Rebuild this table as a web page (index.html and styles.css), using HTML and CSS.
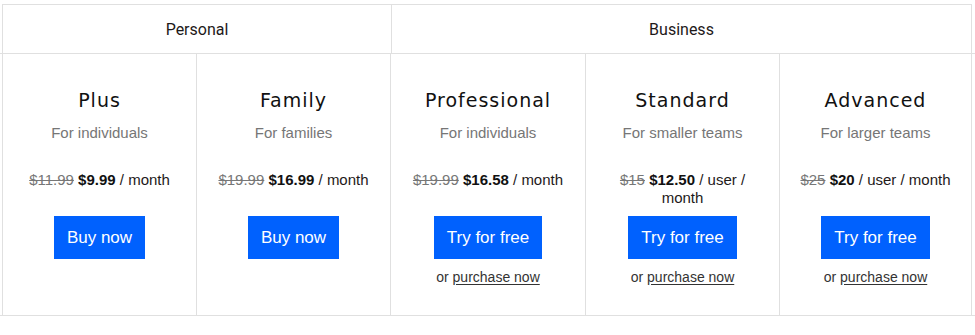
FILE: index.html
```html
<!DOCTYPE html>
<html>
<head>
<meta charset="utf-8">
<link rel="stylesheet" href="styles.css">
</head>
<body>
<div class="head">
  <div class="group personal">Personal</div>
  <div class="group business">Business</div>
</div>
<div class="band">
  <div class="plans">
    <div class="plan">
      <div class="title">Plus</div>
      <div class="sub">For individuals</div>
      <div class="price"><s>$11.99</s> <b>$9.99</b> / month</div>
      <a class="btn">Buy now</a>
    </div>
    <div class="plan">
      <div class="title">Family</div>
      <div class="sub">For families</div>
      <div class="price"><s>$19.99</s> <b>$16.99</b> / month</div>
      <a class="btn">Buy now</a>
    </div>
    <div class="plan">
      <div class="title">Professional</div>
      <div class="sub">For individuals</div>
      <div class="price"><s>$19.99</s> <b>$16.58</b> / month</div>
      <a class="btn">Try for free</a>
      <div class="alt">or <u>purchase now</u></div>
    </div>
    <div class="plan">
      <div class="title">Standard</div>
      <div class="sub">For smaller teams</div>
      <div class="price narrow"><s>$15</s> <b>$12.50</b> / user /<br>month</div>
      <a class="btn">Try for free</a>
      <div class="alt">or <u>purchase now</u></div>
    </div>
    <div class="plan last">
      <div class="title">Advanced</div>
      <div class="sub">For larger teams</div>
      <div class="price"><s>$25</s> <b>$20</b> / user / month</div>
      <a class="btn">Try for free</a>
      <div class="alt">or <u>purchase now</u></div>
    </div>
  </div>
</div>
</body>
</html>
```
FILE: styles.css
```css
* { box-sizing: border-box; }
html, body { margin: 0; padding: 0; background: #fff; }
body {
  font-family: "Liberation Sans", Arial, sans-serif;
  color: #1e1919;
}
.head {
  margin: 4px 0 0 2px;
  width: 970px;
  display: grid;
  grid-template-columns: 388px 1fr;
  border-top: 1px solid #e0e0e0;
  border-left: 1px solid #e0e0e0;
  border-right: 1px solid #e0e0e0;
}
.group {
  height: 48px;
  display: flex;
  align-items: center;
  justify-content: center;
  font-family: Roboto, "Liberation Sans", sans-serif;
  font-size: 16px;
  color: #1e1919;
}
.business { border-left: 1px solid #e0e0e0; }
.band {
  border-top: 1px solid #e0e0e0;
  border-bottom: 1px solid #e0e0e0;
}
.plans {
  margin-left: 2px;
  width: 970px;
  display: grid;
  grid-template-columns: 194px 194px 195px 194px 1fr;
  border-left: 1px solid #e0e0e0;
  border-right: 1px solid #e0e0e0;
}
.plan {
  height: 261px;
  padding-top: 34px;
  display: flex;
  flex-direction: column;
  align-items: center;
  text-align: center;
  border-right: 1px solid #e0e0e0;
}
.plan.last { border-right: none; }
.title {
  font-family: "DejaVu Sans", sans-serif;
  font-size: 19px;
  letter-spacing: 1px;
  line-height: 24px;
  color: #111;
}
.sub {
  margin-top: 11px;
  font-size: 15px;
  line-height: 20px;
  color: #767676;
}
.price {
  margin-top: 28px;
  height: 36px;
  font-size: 15px;
  line-height: 18px;
  color: #1e1919;
  padding: 0 8px;
}
.price s { color: #777; }
.price b { font-weight: bold; color: #111; }
.btn {
  margin-top: 9px;
  height: 43px;
  padding: 0 13px;
  display: flex;
  align-items: center;
  background: #0061fe;
  color: #fff;
  font-size: 17px;
}
.alt {
  margin-top: 9px;
  font-size: 14px;
  line-height: 18px;
  color: #333;
}
.alt u { text-underline-offset: 2px; }
```
